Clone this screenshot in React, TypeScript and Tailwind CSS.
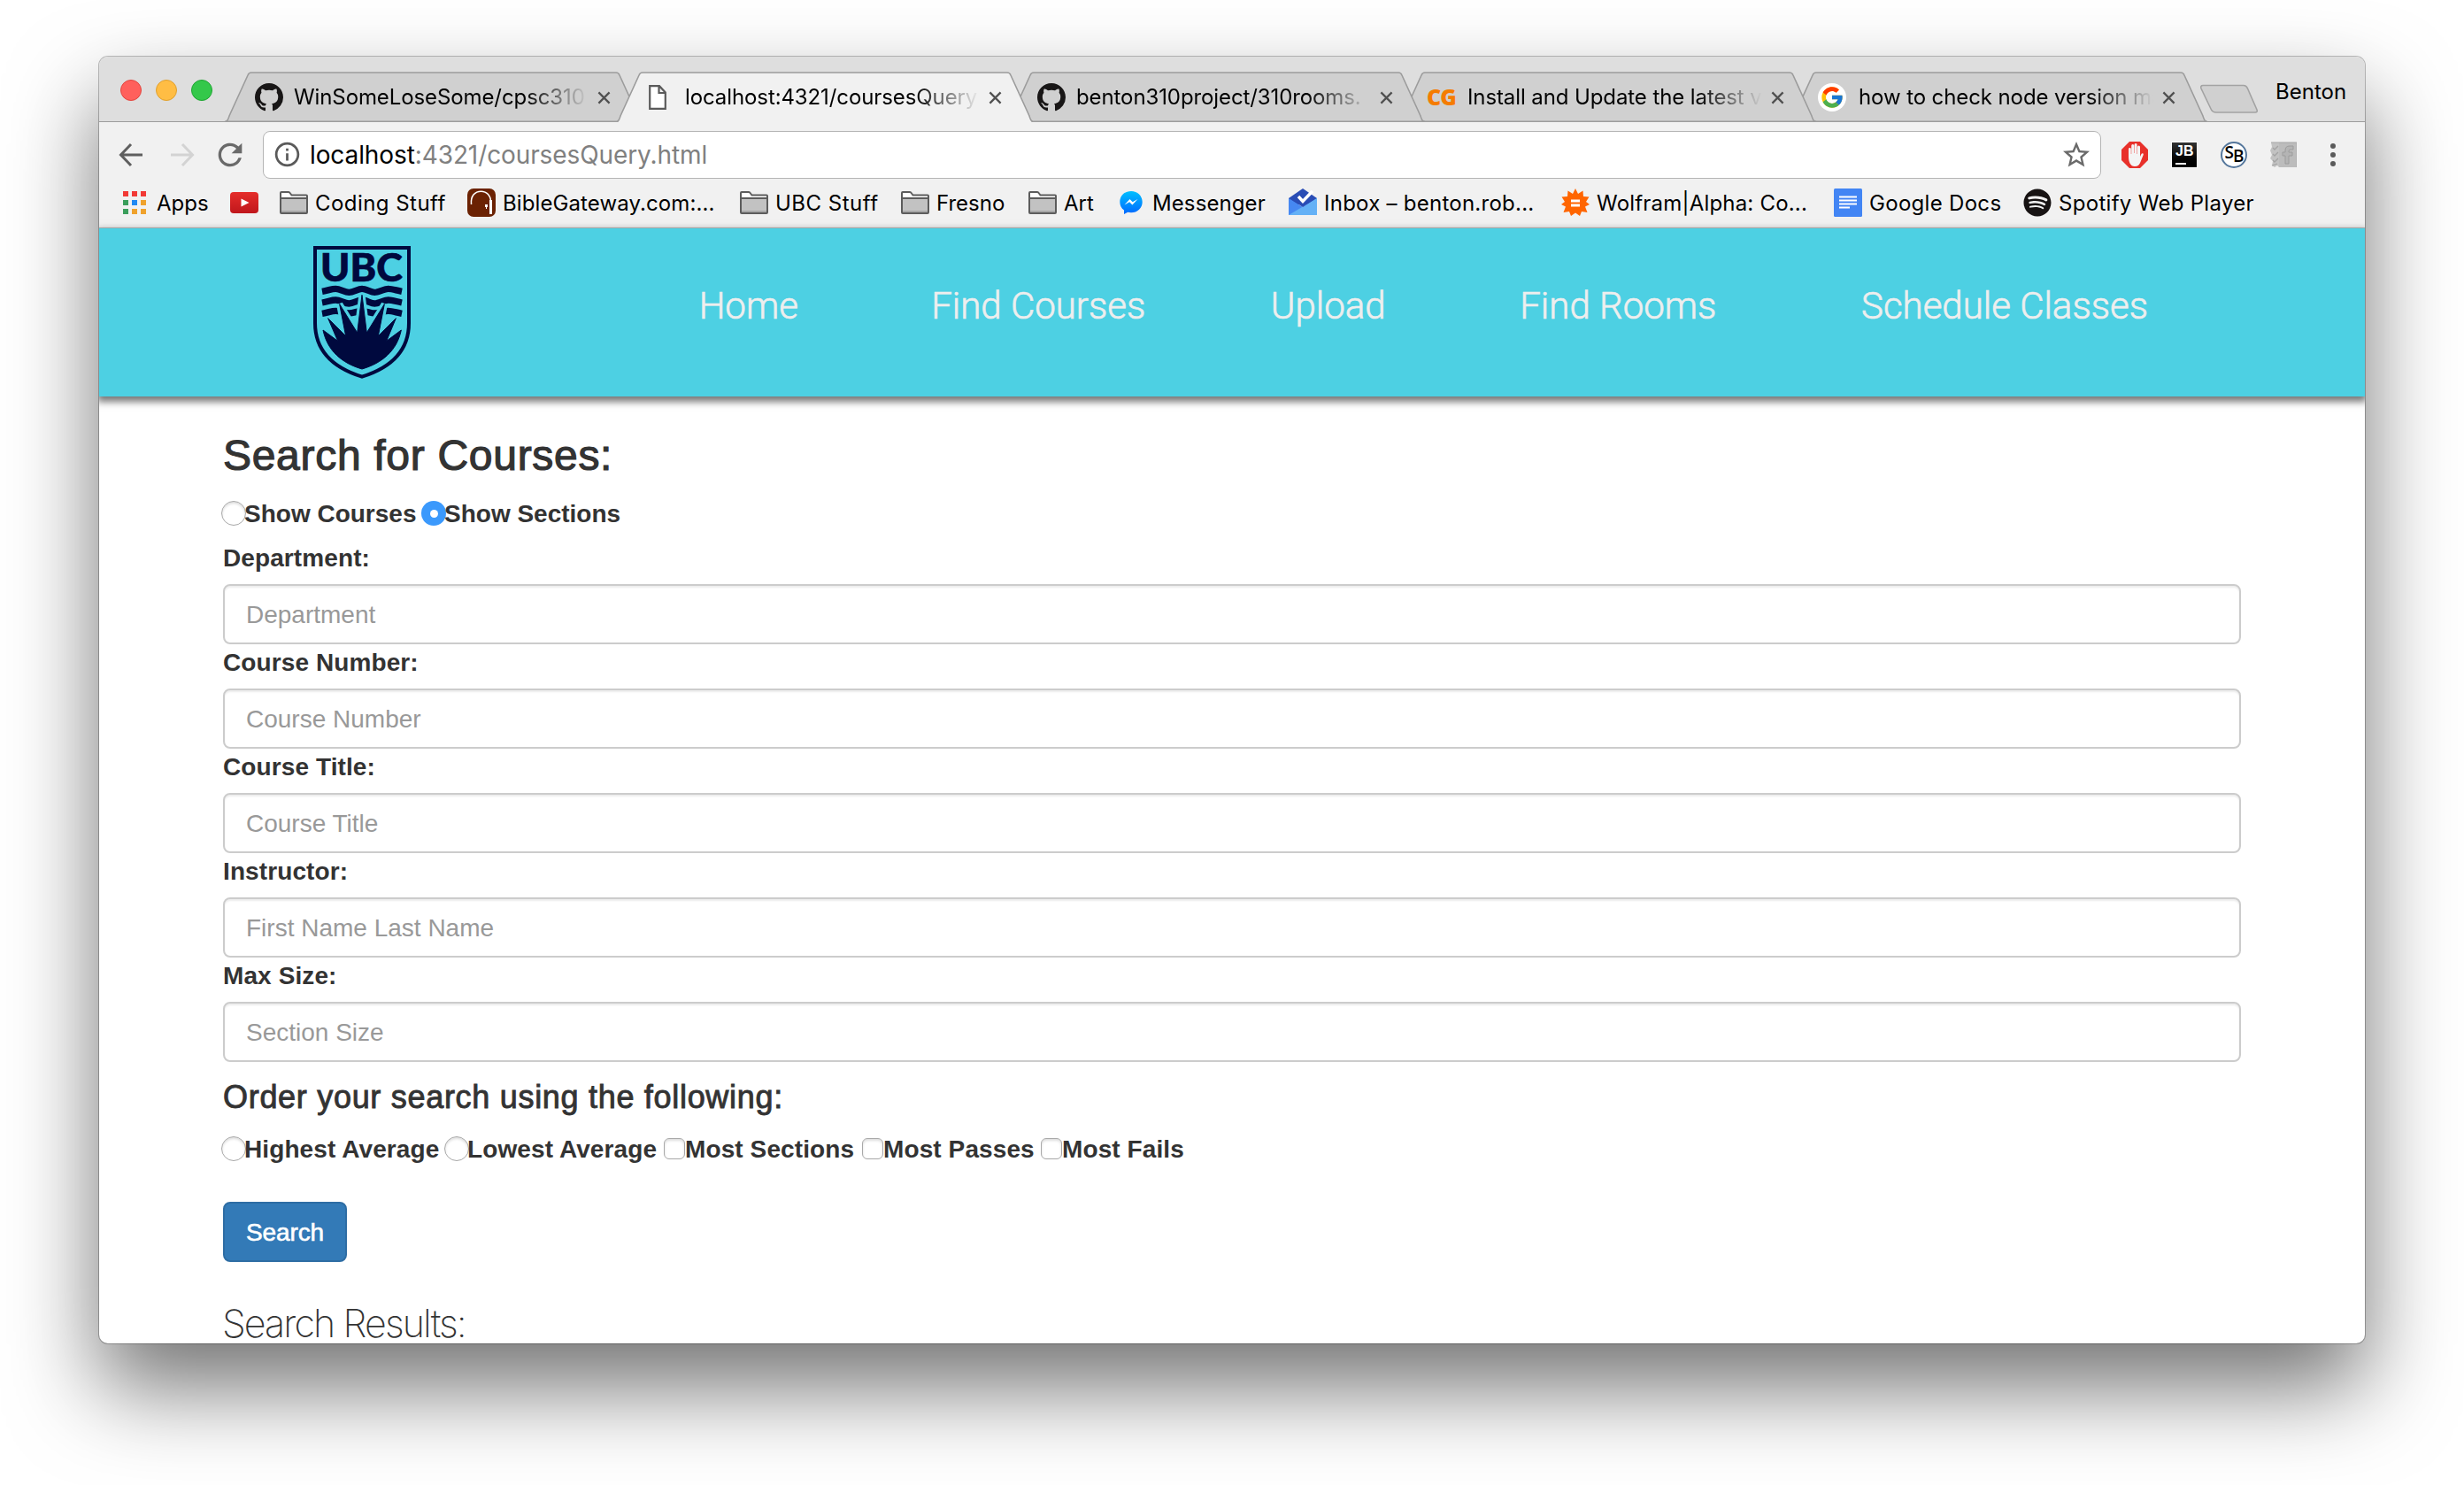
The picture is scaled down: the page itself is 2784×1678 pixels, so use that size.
import React from "react";
import { FcGoogle } from "react-icons/fc";
import { FaSpotify } from "react-icons/fa";
import { MdRefresh, MdStarBorder, MdInfoOutline } from "react-icons/md";

const PageIcon = () => (
  <svg viewBox="0 0 20 28" className="ml-[3px] h-[28px] w-[20px]">
    <path d="M1.2 1.2H12L18.8 8.5V26.8H1.2Z M11.5 1.2V9H18.8" fill="#fff" stroke="#5a5a5a" strokeWidth="2.2" />
  </svg>
);

const CodeGeekIcon = () => (
  <span className="-ml-[2px] font-['Open_Sans',sans-serif] text-[25px] font-extrabold tracking-[-1px] text-[#f57c00]">CG</span>
);

const GoogleIcon = () => (
  <span className="-ml-[2px] flex h-[32px] w-[32px] shrink-0 items-center justify-center rounded-full bg-white">
    <FcGoogle className="h-[28px] w-[28px]" />
  </span>
);

const Github = () => (
  <svg viewBox="0 0 16 16" className="h-[32px] w-[32px]" fill="#181616">
    <path d="M8 0C3.58 0 0 3.58 0 8c0 3.54 2.29 6.53 5.47 7.59.4.07.55-.17.55-.38 0-.19-.01-.82-.01-1.49-2.01.37-2.53-.49-2.69-.94-.09-.23-.48-.94-.82-1.13-.28-.15-.68-.52-.01-.53.63-.01 1.08.58 1.23.82.72 1.21 1.87.87 2.33.66.07-.52.28-.87.51-1.07-1.78-.2-3.64-.89-3.64-3.95 0-.87.31-1.59.82-2.15-.08-.2-.36-1.02.08-2.12 0 0 .67-.21 2.2.82.64-.18 1.32-.27 2-.27s1.36.09 2 .27c1.53-1.04 2.2-.82 2.2-.82.44 1.1.16 1.92.08 2.12.51.56.82 1.27.82 2.15 0 3.07-1.87 3.75-3.65 3.95.29.25.54.73.54 1.48 0 1.07-.01 1.93-.01 2.2 0 .21.15.46.55.38A8.01 8.01 0 0 0 16 8c0-4.42-3.58-8-8-8z" />
  </svg>
);

type TabProps = { icon: React.ReactNode; title: string; active?: boolean; z: string };

function Tab({ icon, title, active, z }: TabProps) {
  return (
    <div className={`relative -mr-[30px] h-[57px] w-[472px] shrink-0 ${z}`}>
      <svg viewBox="0 0 472 57" className="absolute inset-0 h-[57px] w-[472px]">
        <path
          d="M1 57 C4 55 4 53 5 50 L26 4 Q27 1 30 1 H442 Q445 1 446 4 L467 50 C468 53 468 55 471 57"
          fill={active ? "#f1f1f1" : "#d0d0d0"}
          stroke="#9c9c9c"
          strokeWidth="1.6"
        />
        {!active && <path d="M0 56.3H472" stroke="#9c9c9c" strokeWidth="1.6" />}
      </svg>
      <div className="relative flex h-full items-center pl-[34px] pt-px">
        <div className="flex w-[44px] shrink-0 items-center">{icon}</div>
        <div className="w-[333px] overflow-hidden whitespace-nowrap [mask-image:linear-gradient(to_right,#000_78%,transparent)]">
          {title}
        </div>
        <svg viewBox="0 0 16 16" className="ml-[10px] h-[15px] w-[15px]">
          <path d="M1.5 1.5L14.5 14.5M14.5 1.5L1.5 14.5" stroke="#505050" strokeWidth="2.4" />
        </svg>
      </div>
    </div>
  );
}

const Folder = () => (
  <svg viewBox="0 0 32 26" className="h-[26px] w-[32px] shrink-0">
    <path d="M1 24V2Q1 1 2 1H10Q11 1 12 2.5L13.5 4.5H30Q31 4.5 31 5.5V24Q31 25 30 25H2Q1 25 1 24Z" fill="#fff" stroke="#5c5c5c" strokeWidth="2" />
    <path d="M2 8.5H30V24H2Z" fill="#c2c2c2" />
    <path d="M2 22H30V24H2Z" fill="#a6a6a6" />
    <path d="M1 8H31" stroke="#5c5c5c" strokeWidth="2" />
  </svg>
);

const AppsIcon = () => (
  <svg viewBox="0 0 26 26" className="mr-[4px] h-[26px] w-[26px] shrink-0">
    <path d="M0 0h6v6H0zM10 0h6v6h-6zM20 0h6v6h-6z" fill="#f23a36" />
    <path d="M0 10h6v6H0zM0 20h6v6H0z" fill="#3a9e5b" />
    <path d="M10 10h6v6h-6z" fill="#2189f3" />
    <path d="M20 10h6v6h-6zM10 20h6v6h-6zM20 20h6v6h-6z" fill="#efa22c" />
  </svg>
);

const Youtube = () => (
  <svg viewBox="0 0 32 24" className="h-[24px] w-[32px] shrink-0">
    <defs>
      <linearGradient id="yt" x1="0" y1="0" x2="0" y2="1">
        <stop offset="0" stopColor="#e52d2a" />
        <stop offset="1" stopColor="#c0171c" />
      </linearGradient>
    </defs>
    <rect width="32" height="24" rx="4" fill="url(#yt)" />
    <path d="M12.5 7.5L21.5 12L12.5 16.5Z" fill="#fff" />
  </svg>
);

const Bible = () => (
  <svg viewBox="0 0 32 32" className="h-[32px] w-[32px] shrink-0">
    <rect width="32" height="32" rx="7" fill="#6b2203" />
    <path d="M4.5 18C3.5 8 9 3.2 15.5 3.2C22 3.2 26.5 8 26.5 15V29" fill="none" stroke="#fff" strokeWidth="1.6" />
    <path d="M26.5 13V29" stroke="#fff" strokeWidth="3" />
    <path d="M20 18h3v3h-1v2h-1v-2h-1z" fill="#fff" />
  </svg>
);

const Messenger = () => (
  <svg viewBox="0 0 32 32" className="h-[32px] w-[32px] shrink-0">
    <defs>
      <linearGradient id="ms" x1="0" y1="0" x2="0" y2="1">
        <stop offset="0" stopColor="#00c0ff" />
        <stop offset="1" stopColor="#0068ff" />
      </linearGradient>
    </defs>
    <path d="M16 3C8.8 3 3.3 8.3 3.3 15.2C3.3 19 5 22.3 8 24.6V29L12.2 26.8C13.4 27.1 14.7 27.3 16 27.3C23.2 27.3 28.7 22 28.7 15.2S23.2 3 16 3Z" fill="url(#ms)" />
    <path d="M8.5 18.5L14.5 12L17.7 15.2L23.5 12L17.4 18.5L14.2 15.3Z" fill="#fff" />
  </svg>
);

const Inbox = () => (
  <svg viewBox="0 0 32 32" className="h-[32px] w-[32px] shrink-0">
    <path d="M0 11L16 0L32 11V18H0Z" fill="#2a4db5" />
    <path d="M0 11L16 21L32 11V30H0Z" fill="#4688f2" />
    <path d="M32 11L0 30H32Z" fill="#64b1f6" />
    <path d="M4 13L16 21L28 13L16 5Z" fill="#2a4db5" />
    <path d="M11 9L16 14.5L27 3" fill="none" stroke="#fff" strokeWidth="3.4" />
  </svg>
);

const Wolfram = () => (
  <svg viewBox="0 0 32 32" className="h-[32px] w-[32px] shrink-0">
    <path
      d="M16 0L19 6L24.5 2.5L25 9L31.5 9.5L28 15L32 18L27 20.5L29.5 27L23 26L21 31L16 27.5L11 31L9 26L2.5 27L5 20.5L0 18L4 15L.5 9.5L7 9L7.5 2.5L13 6Z"
      fill="#ff6500"
    />
    <path d="M11 12.5h10v3H11zM11 17.5h10v3H11z" fill="#fff" />
  </svg>
);

const Docs = () => (
  <svg viewBox="0 0 32 32" className="h-[32px] w-[32px] shrink-0">
    <rect width="32" height="32" rx="1.5" fill="#4285f4" />
    <path d="M6 9.5H26M6 13.5H26M6 17.5H26M6 21.5H18" stroke="#fff" strokeWidth="2" />
  </svg>
);

const Spotify = () => <FaSpotify className="h-[32px] w-[32px] shrink-0 text-[#171313]" />;

const bookmarks = [
  { icon: <AppsIcon />, text: "Apps", w: "w-[121px]" },
  { icon: <Youtube />, text: "", w: "w-[56px]" },
  { icon: <Folder />, text: "Coding Stuff", w: "w-[212px] tracking-[0.45px]" },
  { icon: <Bible />, text: "BibleGateway.com:...", w: "w-[308px] tracking-[0.1px]" },
  { icon: <Folder />, text: "UBC Stuff", w: "w-[182px] tracking-[0.5px]" },
  { icon: <Folder />, text: "Fresno", w: "w-[144px]" },
  { icon: <Folder />, text: "Art", w: "w-[100px]" },
  { icon: <Messenger />, text: "Messenger", w: "w-[194px] tracking-[0.1px]" },
  { icon: <Inbox />, text: "Inbox – benton.rob...", w: "w-[308px] tracking-[0.25px]" },
  { icon: <Wolfram />, text: "Wolfram|Alpha: Co...", w: "w-[308px] tracking-[0.2px]" },
  { icon: <Docs />, text: "Google Docs", w: "w-[214px] tracking-[0.3px]" },
  { icon: <Spotify />, text: "Spotify Web Player", w: "w-[270px] tracking-[0.3px]" },
];

function Extensions() {
  return (
    <div className="ml-[23px] flex items-center gap-[26px]">
      <svg viewBox="0 0 30 30" className="h-[30px] w-[30px]">
        <path d="M9 0H21L30 9V21L21 30H9L0 21V9Z" fill="#e8312b" />
        <path
          d="M8 17V8.5a1.4 1.4 0 0 1 2.8 0V14h.4V4.5a1.5 1.5 0 0 1 3 0V13h.4V3.5a1.5 1.5 0 0 1 3 0V14h.4V6a1.5 1.5 0 0 1 3 0V17l1.5-3c.8-1.3 2.8-.6 2.2 1L21.5 23C20.5 26 18.5 28 15 28C10 28 8 23 8 17Z"
          fill="#f4f4f4"
        />
      </svg>
      <div className="flex h-[30px] w-[30px] flex-col border border-white bg-gradient-to-b from-[#333] to-black pl-[4px] font-['Liberation_Sans',sans-serif] text-[16px] leading-[20px] font-bold text-white">
        JB
        <span className="mt-[3px] h-[2px] w-[12px] bg-white" />
      </div>
      <div className="flex h-[30px] w-[30px] items-center justify-center rounded-full border-2 border-[#55779c] bg-white font-['Open_Sans',sans-serif] text-[19px] leading-none font-semibold tracking-[-1px] text-black">
        <span className="-mt-[4px]">S</span>
        <span className="mt-[3px]">B</span>
      </div>
      <svg viewBox="0 0 30 30" className="h-[30px] w-[30px]">
        <path d="M1 1H30V29H10L8 27L5 29L2 27L3 22L0 19L2 15L0 10L2 6Z" fill="#c2c2c2" />
        <path d="M10 1H30V29H10Z" fill="#bcbcbc" />
        <path d="M1 1H30V29" fill="none" stroke="#a5a5a5" strokeWidth="1" />
        <path d="M17 25V16H14V12H17V10Q17 5 22 5H26V9H23Q21 9 21 11V12H25V16H21V25Z" fill="#b4b4b4" stroke="#9c9c9c" strokeWidth="1" />
        <path d="M3 7L5 9L9 5M3 14L5 16L9 12M3 21L5 23L9 19M2 27L8 25" fill="none" stroke="#a3a3a3" strokeWidth="1.3" />
      </svg>
      <svg viewBox="0 0 6 28" className="ml-[12px] h-[28px] w-[6px]">
        <circle cx="3" cy="4" r="3" fill="#5a5a5a" />
        <circle cx="3" cy="14" r="3" fill="#5a5a5a" />
        <circle cx="3" cy="24" r="3" fill="#5a5a5a" />
      </svg>
    </div>
  );
}

const SUN =
  "M207 205L223 333L283 236L262 344L322 284L290 361L340 324C325 395 275 436 207 456C139 436 90 395 75 324L125 361L92 284L152 344L131 236L191 333Z";

const Crest = () => (
  <svg viewBox="42 39 330 450" className="h-[150px] w-[110px]" fill="#00093e">
    <path d="M48 45H366V300C366 390 310 450 207 482C104 450 48 390 48 300Z" fill="none" stroke="#00093e" strokeWidth="12" />
    <text
      x="66"
      y="160"
      textLength="278"
      lengthAdjust="spacingAndGlyphs"
      stroke="#00093e"
      strokeWidth="2"
      className="font-['Lato',sans-serif] text-[129px] font-black"
    >
      UBC
    </text>
    <g fill="none" stroke="#00093e" strokeWidth="22">
      <path d="M72 193C95 189 103 184 118 184S148 196 163 196S193 184 207 184S237 196 250 196S283 184 296 184S322 189 342 193" />
      <path d="M72 231C95 227 103 222 118 222S148 234 163 234S193 222 207 222S237 234 250 234S283 222 296 222S322 227 342 231" />
      <path d="M72 268C95 264 103 259 118 259S148 267 163 267S193 259 207 259S237 267 250 267S283 259 296 259S322 264 342 268" />
    </g>
    <path d={SUN} fill="#4dd0e3" stroke="#4dd0e3" strokeWidth="22" strokeLinejoin="bevel" />
    <path d={SUN} stroke="#00093e" strokeWidth="3" />
  </svg>
);

const Radio = ({ checked }: { checked?: boolean }) =>
  checked ? (
    <span className="flex h-[28px] w-[28px] shrink-0 items-center justify-center rounded-full bg-[#3b99fc]">
      <span className="h-[9px] w-[9px] rounded-full bg-white" />
    </span>
  ) : (
    <span className="h-[28px] w-[28px] shrink-0 rounded-full border border-[#a8a8a8] bg-white shadow-[inset_0_2px_3px_#ddd]" />
  );

const Check = () => (
  <span className="h-[24px] w-[24px] shrink-0 rounded-[6px] border border-[#a8a8a8] bg-white shadow-[inset_0_2px_3px_#ddd]" />
);

const fields = [
  ["Department:", "Department"],
  ["Course Number:", "Course Number"],
  ["Course Title:", "Course Title"],
  ["Instructor:", "First Name Last Name"],
  ["Max Size:", "Section Size"],
];

export default function App() {
  return (
    <div className="h-[1678px] w-[2784px] overflow-hidden bg-white px-[112px] pt-[64px]">
      <div className="flex h-[1454px] w-[2560px] flex-col overflow-hidden rounded-[10px] bg-white shadow-[0_0_0_1px_rgba(0,0,0,0.25),0_50px_100px_rgba(0,0,0,0.55)]">
        <div className="font-['Inter',sans-serif] text-[24px] text-black">
          <div className="flex h-[74px] items-end border-b border-[#9c9c9c] bg-[#dedede] pl-[24px]">
            <div className="mb-[23px] flex w-[118px] gap-[16px]">
              <span className="h-[24px] w-[24px] rounded-full border border-[#e2463f] bg-[#ff605c]" />
              <span className="h-[24px] w-[24px] rounded-full border border-[#dfa02f] bg-[#ffbd44]" />
              <span className="h-[24px] w-[24px] rounded-full border border-[#1fa532] bg-[#34c84a]" />
            </div>
            <div className="-mb-px flex tracking-[-0.1px]">
              <Tab z="z-[1]" icon={<Github />} title="WinSomeLoseSome/cpsc310" />
              <Tab z="z-[5]" active icon={<PageIcon />} title="localhost:4321/coursesQuery" />
              <Tab z="z-[4]" icon={<Github />} title="benton310project/310rooms." />
              <Tab z="z-[3]" icon={<CodeGeekIcon />} title="Install and Update the latest v" />
              <Tab z="z-[2]" icon={<GoogleIcon />} title="how to check node version ma" />
            </div>
            <svg viewBox="0 0 68 34" className="mb-[8px] ml-[21px] h-[34px] w-[68px]">
              <path d="M4 1.5H50Q53 1.5 54.5 5L65 29Q66 32 63 32H19Q15 32 13.5 29L2 5Q1 1.5 4 1.5Z" fill="#d0d0d0" stroke="#a2a2a2" strokeWidth="1.6" />
            </svg>
            <span className="mb-[15px] ml-[18px]">Benton</span>
          </div>

          <div className="flex h-[73px] items-center bg-[#f1f1f1] pl-[22px]">
            <svg viewBox="0 0 30 28" className="h-[28px] w-[30px]" fill="none" stroke="#5f5f5f" strokeWidth="3">
              <path d="M27 14H3M14 2L2.5 14L14 26" />
            </svg>
            <svg viewBox="0 0 30 28" className="ml-[26px] h-[28px] w-[30px]" fill="none" stroke="#d3d3d3" strokeWidth="3">
              <path d="M3 14H27M16 2L27.5 14L16 26" />
            </svg>
            <MdRefresh className="ml-[20px] h-[40px] w-[40px] text-[#6a6a6a]" />
            <div className="ml-[17px] flex h-[54px] w-[2077px] items-center rounded-[8px] border border-[#b5b5b5] bg-white pr-[9px] pl-[10px] text-[28px]">
              <MdInfoOutline className="h-[33px] w-[33px] text-[#5a5a5a]" />
              <span className="ml-[9px] flex-1 tracking-[-0.1px] text-[#808080]">
                <span className="text-black">localhost</span>:4321/coursesQuery.html
              </span>
              <MdStarBorder className="h-[36px] w-[36px] text-[#6a6a6a]" />
            </div>
            <Extensions />
          </div>

          <div className="flex h-[47px] items-center border-b border-[#b6b6b6] bg-[#f1f1f1] pb-[11px] pl-[27px]">
            {bookmarks.map((b, i) => (
              <div key={i} className={`flex shrink-0 items-center gap-[8px] whitespace-nowrap ${b.w}`}>
                {b.icon}
                <span className="pt-[2px]">{b.text}</span>
              </div>
            ))}
          </div>
        </div>

        <header className="relative z-10 flex h-[190px] shrink-0 items-start bg-[#4dd0e3] font-['Roboto',sans-serif] text-[42px] font-light text-[#eee] shadow-[0_4px_8px_2px_#777]">
          <div className="w-[570px] pt-[20px] pl-[242px]">
            <Crest />
          </div>
          <nav className="flex pt-[61px] text-center leading-[54px] [-webkit-text-stroke:0.7px_#eee]">
            <a className="w-[327.5px]">Home</a>
            <a className="w-[327.5px]">Find Courses</a>
            <a className="w-[327.5px]">Upload</a>
            <a className="w-[327.5px]">Find Rooms</a>
            <a className="w-[546px]">Schedule Classes</a>
          </nav>
        </header>

        <main className="flex flex-col px-[140px] font-['Liberation_Sans',Arial,sans-serif] text-[28px] leading-[40px] text-[#333]">
          <h3 className="mt-[40px] pt-px text-[48px] leading-[52px] tracking-[0.7px] [-webkit-text-stroke:1.2px_#333]">Search for Courses:</h3>
          <div className="mt-[19px] -ml-[2px] flex h-[40px] items-center font-bold">
            <div className="flex w-[226px] items-center"><Radio /><span className="-ml-[2px] pt-[2px]">Show Courses</span></div>
            <div className="flex items-center"><Radio checked /><span className="-ml-[2px] pt-[2px]">Show Sections</span></div>
          </div>
          <div className="mt-[10px]">
            {fields.map(([label, placeholder]) => (
              <label key={label} className="flex flex-col gap-[9px]">
                <span className="pt-px font-bold tracking-[0.1px]">{label}</span>
                <input
                  placeholder={placeholder}
                  className="h-[68px] w-full rounded-[8px] border-2 border-[#ccc] px-[24px] pt-px shadow-[inset_0_2px_2px_rgba(0,0,0,0.075)] placeholder:text-[#999]"
                />
              </label>
            ))}
          </div>
          <h4 className="mt-[20px] text-[36px] tracking-[0.7px] [-webkit-text-stroke:0.9px_#333]">Order your search using the following:</h4>
          <div className="mt-[18px] -ml-[2px] flex h-[40px] items-center font-bold tracking-[0.1px]">
            <div className="flex w-[252px] items-center"><Radio /><span className="-ml-[2px] pt-[2px]">Highest Average</span></div>
            <div className="flex w-[248px] items-center"><Radio /><span className="-ml-[2px] pt-[2px]">Lowest Average</span></div>
            <div className="flex w-[224px] items-center"><Check /><span className="pt-[2px]">Most Sections</span></div>
            <div className="flex w-[202px] items-center"><Check /><span className="pt-[2px]">Most Passes</span></div>
            <div className="flex items-center"><Check /><span className="pt-[2px]">Most Fails</span></div>
          </div>
          <button className="mt-[40px] h-[68px] w-[140px] rounded-[8px] border-2 border-[#2e6da4] bg-[#337ab7] pt-px tracking-[-0.1px] text-white [-webkit-text-stroke:0.6px_#fff]">
            Search
          </button>
          <h3 className="mt-[43px] -ml-px font-['Inter',sans-serif] text-[43px] leading-[52px] font-extralight whitespace-nowrap tracking-[-1.9px]">Search Results:</h3>
        </main>
      </div>
    </div>
  );
}
